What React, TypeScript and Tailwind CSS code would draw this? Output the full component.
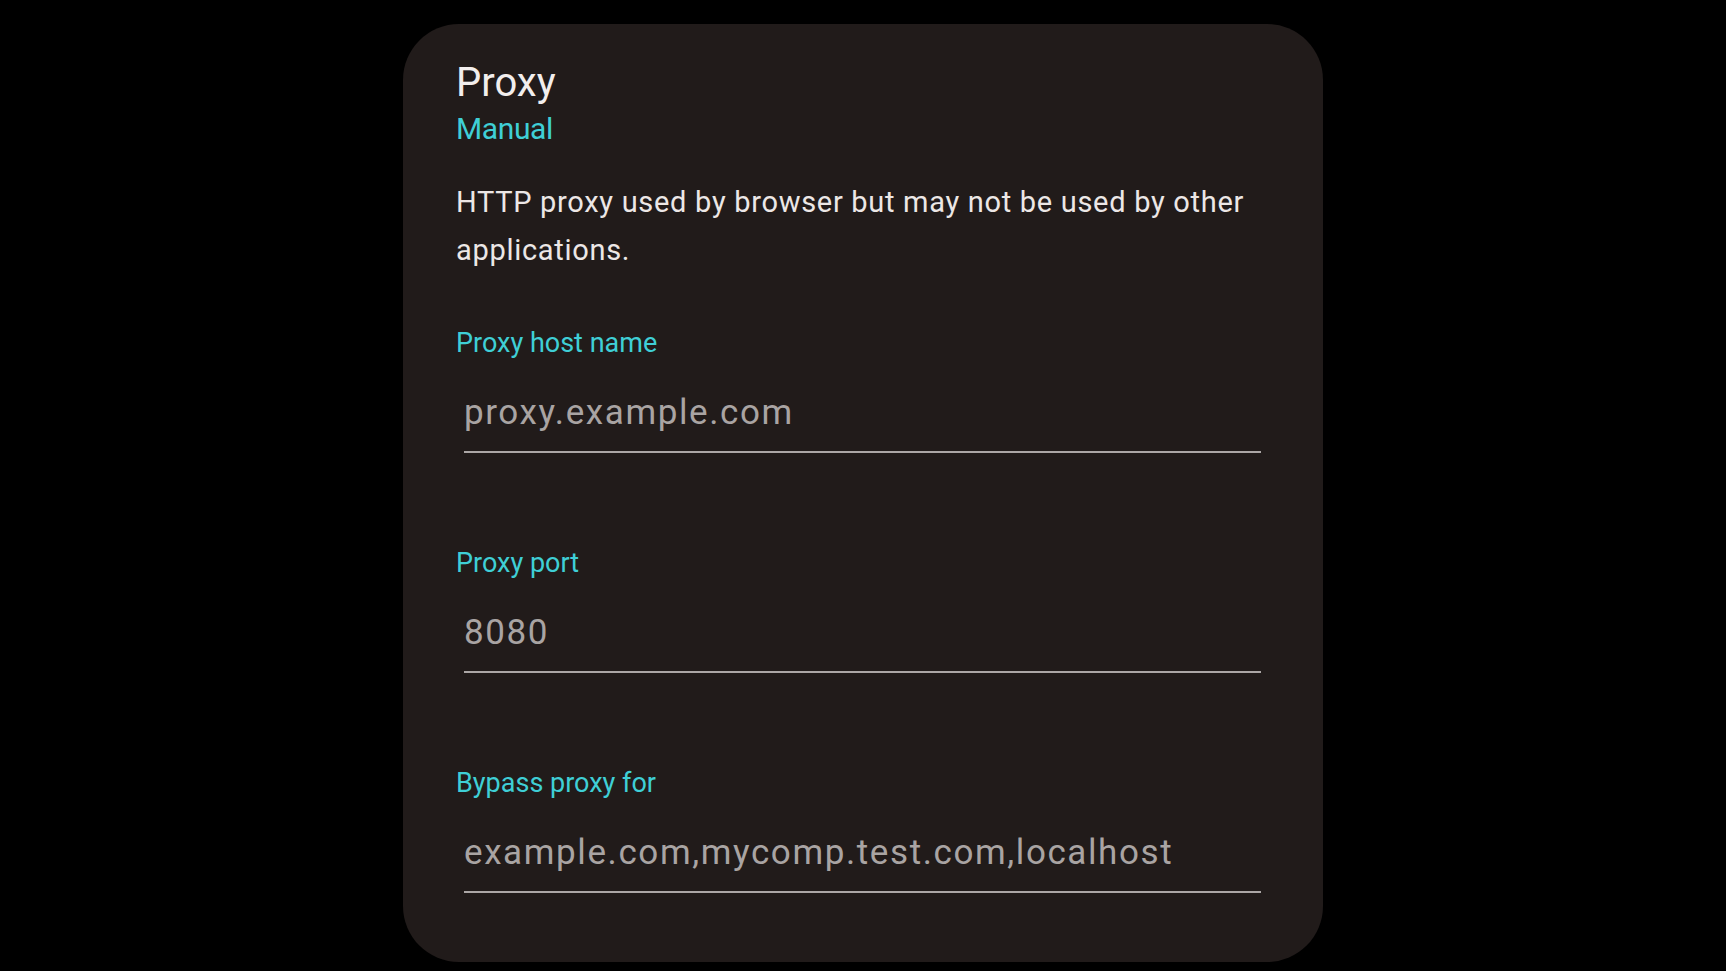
import React from "react";

const fields = [
  { label: "Proxy host name", placeholder: "proxy.example.com" },
  { label: "Proxy port", placeholder: "8080" },
  { label: "Bypass proxy for", placeholder: "example.com,mycomp.test.com,localhost" },
];

export default function App() {
  return (
    <div className="min-h-screen w-full bg-black flex items-start justify-center pt-[24px] font-['Roboto',sans-serif]">
      <div className="w-[920px] rounded-[56px] bg-[#211b1a] pl-[53px] pr-[62px] pt-[35px] pb-[69px]">
        <h1 className="text-[40px] leading-[48px] text-[#f2eeed]">Proxy</h1>
        <div className="text-[30px] leading-[44px] tracking-[-0.4px] text-[#3fcfd6]">Manual</div>
        <p className="mt-[27px] text-[29px] leading-[48px] tracking-[0.7px] text-[#ece7e6]">
          HTTP proxy used by browser but may not be used by other applications.
        </p>

        {fields.map((f, i) => (
          <div key={f.label} className={i === 0 ? "mt-[51px]" : "mt-[92px]"}>
            <div className="text-[27px] leading-[36px] text-[#3fcfd6]">{f.label}</div>
            <div className="mt-[32px] ml-[8px] border-b-2 border-[#aca7a6] pb-[18px]">
              <input
                className="w-full bg-transparent text-[35px] leading-[40px] tracking-[1.6px] text-[#a9a4a3] placeholder:text-[#a9a4a3] outline-none"
                placeholder={f.placeholder}
              />
            </div>
          </div>
        ))}
      </div>
    </div>
  );
}
